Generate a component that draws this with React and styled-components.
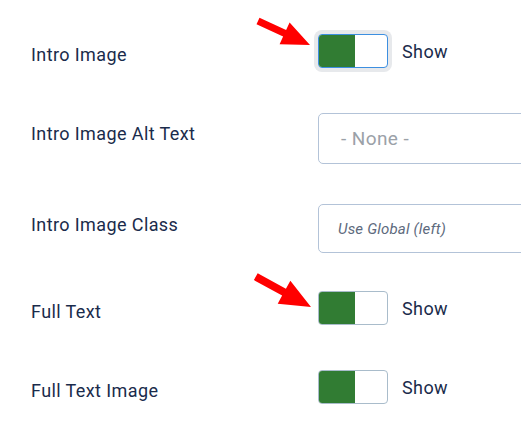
import React from "react";
import styled, { createGlobalStyle } from "styled-components";

const Global = createGlobalStyle`
  html, body {
    margin: 0;
    background: #fff;
    overflow: hidden;
  }
  body {
    font-family: Roboto, "Liberation Sans", sans-serif;
    color: #1a2b4b;
  }
`;

const Form = styled.div`
  padding: 34px 0 0 31px;
  box-sizing: border-box;
  width: 100%;
  overflow: hidden;
`;

const Row = styled.div`
  display: grid;
  grid-template-columns: 287px 1fr;
  align-items: start;
  margin-bottom: ${(p) => p.$gap || 45}px;
  &:last-child {
    margin-bottom: 0;
  }
`;

const Label = styled.label`
  font-size: 18px;
  letter-spacing: 0.4px;
  line-height: 27px;
  padding-top: 7px;
  color: #1a2b4b;
`;

const Control = styled.div`
  position: relative;
  display: flex;
  align-items: center;
`;

const Switch = styled.div`
  position: relative;
  display: flex;
  width: 70px;
  height: 34px;
  box-sizing: border-box;
  border: 1px solid ${(p) => (p.$focus ? "#3d8fe0" : "#a9bccb")};
  border-radius: 4px;
  overflow: hidden;
  background: #fff;
  box-shadow: ${(p) => (p.$focus ? "0 0 0 4px #e7e9ec" : "none")};
  &::before {
    content: "";
    width: 36px;
    height: 100%;
    background: #317c33;
  }
`;

const SwitchText = styled.span`
  margin-left: 14px;
  font-size: 18px;
  letter-spacing: 0.4px;
  color: #1a2b4b;
`;

const Field = styled.div`
  flex: none;
  width: 300px;
  box-sizing: border-box;
  height: ${(p) => p.$h}px;
  border: 1px solid #b3c3d8;
  border-radius: 5px;
  display: flex;
  align-items: center;
  padding-left: ${(p) => p.$pad}px;
  font-size: ${(p) => p.$size}px;
  letter-spacing: ${(p) => p.$track}px;
  font-style: ${(p) => (p.$italic ? "italic" : "normal")};
  color: ${(p) => p.$color};
`;

// pointer arrows drawn over the screenshot, tip at (54,28)
const Arrow = styled.svg`
  position: absolute;
  left: ${(p) => p.$x}px;
  top: ${(p) => p.$y}px;
  width: 56px;
  height: 30px;
  overflow: visible;
  transform-origin: 54px 28px;
  transform: rotate(${(p) => p.$tilt || 0}deg) scale(${(p) => p.$scale || 1});
`;

const RedArrow = ({ x, y, tilt, scale }) => (
  <Arrow $x={x} $y={y} $tilt={tilt} $scale={scale} viewBox="0 0 56 30">
    <polygon
      fill="#ff0000"
      points="3.5,0.8 30.1,13.1 33.6,5.4 54,28 23.6,27.2 27.1,19.5 0.5,7.2"
    />
  </Arrow>
);

const Toggle = ({ focus, arrow }) => (
  <Control>
    {arrow && <RedArrow {...arrow} />}
    <Switch $focus={focus} />
    <SwitchText>Show</SwitchText>
  </Control>
);

export default function App() {
  return (
    <>
      <Global />
      <Form>
        <Row>
          <Label>Intro Image</Label>
          <Toggle focus arrow={{ x: -62, y: -17 }} />
        </Row>
        <Row $gap={40}>
          <Label>Intro Image Alt Text</Label>
          <Field $h={51} $pad={22} $size={19} $track={0.4} $color="#9ba1a8">
            - None -
          </Field>
        </Row>
        <Row $gap={38}>
          <Label>Intro Image Class</Label>
          <Field $h={49} $pad={19} $size={15} $track={0.2} $italic $color="#5d6a7d">
            Use Global (left)
          </Field>
        </Row>
        <Row>
          <Label>Full Text</Label>
          <Toggle arrow={{ x: -61, y: -12, tilt: 4, scale: 1.1 }} />
        </Row>
        <Row>
          <Label>Full Text Image</Label>
          <Toggle />
        </Row>
      </Form>
    </>
  );
}
